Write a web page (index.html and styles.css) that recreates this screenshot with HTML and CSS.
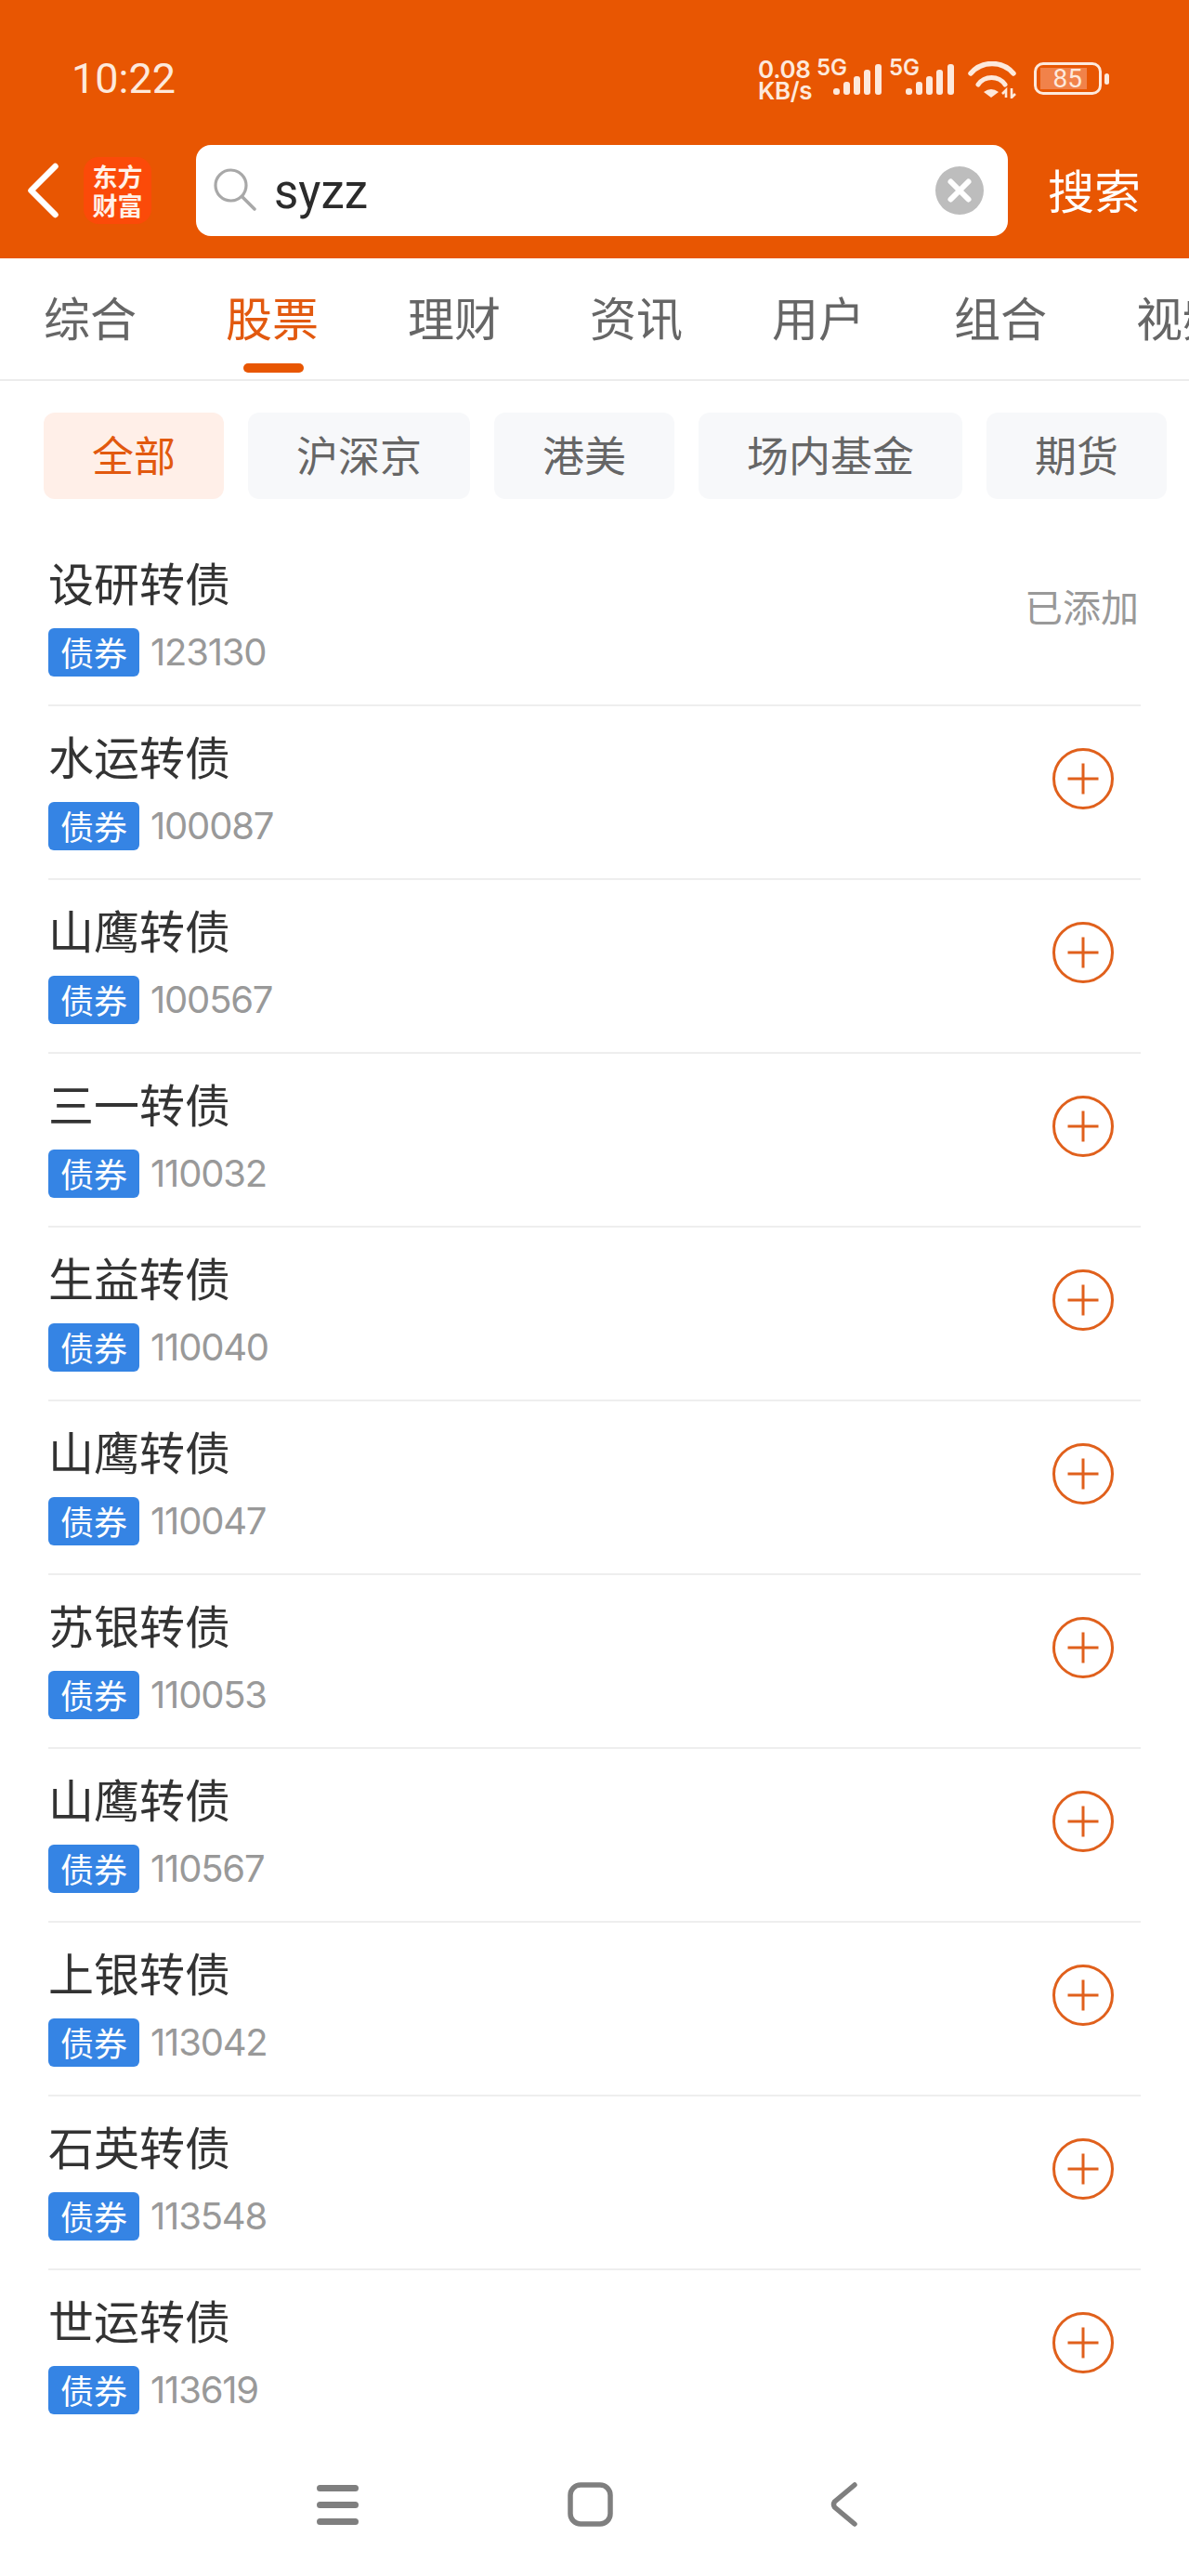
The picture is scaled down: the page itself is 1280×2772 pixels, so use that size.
FILE: index.html
```html
<!DOCTYPE html>
<html lang="zh-CN">
<head>
<meta charset="utf-8">
<title>搜索</title>
<link rel="stylesheet" href="styles.css">
</head>
<body>
<svg class="defs" width="0" height="0">
  <symbol id="plus" viewBox="0 0 66 66"><circle cx="33" cy="33" r="31.5" fill="none" stroke="#e0601c" stroke-width="3"/><path d="M16.5 33H49.5M33 16.5V49.5" stroke="#e0601c" stroke-width="3"/></symbol>
  <symbol id="bars" viewBox="0 0 52 33"><g fill="#fde9dc"><rect x="0" y="26" width="7" height="7" rx="3"/><rect x="11" y="19" width="7" height="14" rx="3"/><rect x="22" y="13" width="7" height="20" rx="3"/><rect x="33" y="6" width="7" height="27" rx="3"/><rect x="45" y="0" width="7" height="33" rx="3"/></g></symbol>
</svg>
<div class="app">
  <header class="top">
    <div class="status">
      <span class="time">10:22</span>
      <div class="status-icons">
        <div class="speed"><span>0.08</span><span>KB/s</span></div>
        <div class="sim"><span class="five">5G</span><svg class="bars"><use href="#bars"/></svg></div>
        <div class="sim"><span class="five">5G</span><svg class="bars"><use href="#bars"/></svg></div>
        <svg class="wifi" width="52" height="40" viewBox="0 0 52 40"><g fill="none" stroke="#fde9dc" stroke-linecap="round"><path d="M3 13C15 -1 37 -1 49 13" stroke-width="5.5"/><path d="M11 25C18 15 33 15 40 25" stroke-width="5"/></g><path d="M17 33Q25 27 33 33L25 39Z" fill="#fde9dc"/><path d="M41 39V31L37 35M47 29V39L51 35" fill="none" stroke="#fde9dc" stroke-width="2.6"/></svg>
        <div class="battery"><div class="cell"><div class="fill"><span class="pct">85</span></div></div><div class="cap"></div></div>
      </div>
    </div>
    <div class="searchbar">
      <svg class="back" width="34" height="60" viewBox="0 0 34 60"><path d="M30.500 4L4.500 30L30.500 56" fill="none" stroke="#fff" stroke-width="6.500" stroke-linecap="round" stroke-linejoin="round"/></svg>
      <div class="logo"><span>东方</span><span>财富</span></div>
      <div class="input">
        <svg class="glass" width="46" height="46" viewBox="0 0 46 46"><circle cx="18.500" cy="18.500" r="16.500" fill="none" stroke="#a8a8a8" stroke-width="3.200"/><path d="M30.500 30.500L44 44" stroke="#a8a8a8" stroke-width="3.500" stroke-linecap="round"/></svg>
        <span class="query">syzz</span>
        <svg class="clear" width="52" height="52" viewBox="0 0 52 52"><circle cx="26" cy="26" r="26" fill="#bdbdbd"/><path d="M16.500 16.500L35.500 35.500M35.500 16.500L16.500 35.500" stroke="#fff" stroke-width="6" stroke-linecap="round"/></svg>
      </div>
      <span class="go">搜索</span>
    </div>
  </header>

  <nav class="tabs">
    <span class="tab">综合</span>
    <span class="tab active">股票</span>
    <span class="tab">理财</span>
    <span class="tab">资讯</span>
    <span class="tab">用户</span>
    <span class="tab">组合</span>
    <span class="tab">视频</span>
  </nav>

  <div class="chips">
    <span class="chip on">全部</span>
    <span class="chip">沪深京</span>
    <span class="chip">港美</span>
    <span class="chip">场内基金</span>
    <span class="chip">期货</span>
  </div>

  <ul class="list">
    <li class="row"><div class="info"><div class="name">设研转债</div><div class="meta"><span class="tag">债券</span><span class="code">123130</span></div></div><span class="added">已添加</span></li>
    <li class="row"><div class="info"><div class="name">水运转债</div><div class="meta"><span class="tag">债券</span><span class="code">100087</span></div></div><svg class="plus"><use href="#plus"/></svg></li>
    <li class="row"><div class="info"><div class="name">山鹰转债</div><div class="meta"><span class="tag">债券</span><span class="code">100567</span></div></div><svg class="plus"><use href="#plus"/></svg></li>
    <li class="row"><div class="info"><div class="name">三一转债</div><div class="meta"><span class="tag">债券</span><span class="code">110032</span></div></div><svg class="plus"><use href="#plus"/></svg></li>
    <li class="row"><div class="info"><div class="name">生益转债</div><div class="meta"><span class="tag">债券</span><span class="code">110040</span></div></div><svg class="plus"><use href="#plus"/></svg></li>
    <li class="row"><div class="info"><div class="name">山鹰转债</div><div class="meta"><span class="tag">债券</span><span class="code">110047</span></div></div><svg class="plus"><use href="#plus"/></svg></li>
    <li class="row"><div class="info"><div class="name">苏银转债</div><div class="meta"><span class="tag">债券</span><span class="code">110053</span></div></div><svg class="plus"><use href="#plus"/></svg></li>
    <li class="row"><div class="info"><div class="name">山鹰转债</div><div class="meta"><span class="tag">债券</span><span class="code">110567</span></div></div><svg class="plus"><use href="#plus"/></svg></li>
    <li class="row"><div class="info"><div class="name">上银转债</div><div class="meta"><span class="tag">债券</span><span class="code">113042</span></div></div><svg class="plus"><use href="#plus"/></svg></li>
    <li class="row"><div class="info"><div class="name">石英转债</div><div class="meta"><span class="tag">债券</span><span class="code">113548</span></div></div><svg class="plus"><use href="#plus"/></svg></li>
    <li class="row last"><div class="info"><div class="name">世运转债</div><div class="meta"><span class="tag">债券</span><span class="code">113619</span></div></div><svg class="plus"><use href="#plus"/></svg></li>
  </ul>

  <footer class="navbar">
    <svg class="nav-menu" width="45" height="43" viewBox="0 0 45 43"><path d="M3.500 3.500H41.500M3.500 21.500H41.500M3.500 39.500H41.500" stroke="#7f7f7f" stroke-width="7" stroke-linecap="round"/></svg>
    <svg class="nav-home" width="49" height="48" viewBox="0 0 49 48"><rect x="3" y="3" width="43" height="42" rx="11" fill="none" stroke="#7f7f7f" stroke-width="5.500"/></svg>
    <svg class="nav-back" width="29" height="48" viewBox="0 0 29 48"><path d="M26 3L4.500 21Q2.500 24 4.500 27L26 45" fill="none" stroke="#7f7f7f" stroke-width="5.500" stroke-linecap="round"/></svg>
  </footer>
</div>
</body>
</html>
```
FILE: styles.css
```css
* { box-sizing: border-box; }
html, body { margin: 0; padding: 0; background: #fff; }
body { font-family: "Noto Sans CJK SC", "Noto Sans", sans-serif; }
.defs { display: block; height: 0; }
.app { width: 1280px; height: 2772px; overflow: hidden; display: flex; flex-direction: column; background: #fff; }

.top { height: 278px; background: #e85602; flex: none; }
.status { height: 156px; padding: 51px 86px 0 77px; display: flex; justify-content: space-between; align-items: flex-start; color: #fde9dc; }
.time { font: 400 45px/68px Roboto, sans-serif; }
.status-icons { display: flex; align-items: flex-start; margin-top: 12px; }
.speed { display: flex; flex-direction: column; font: 600 26px/23px Inter, Roboto, sans-serif; width: 57px; margin-right: 6px; letter-spacing: -0.3px; }
.sim { position: relative; width: 78px; height: 40px; }
.five { position: absolute; left: 0; top: -4px; font: 600 24px/28px Inter, Roboto, sans-serif; }
.bars { position: absolute; left: 18px; top: 6px; width: 52px; height: 33px; }
.wifi { margin: 3px 19px 0 7px; }
.battery { display: flex; align-items: center; margin-top: 4px; }
.cell { width: 73px; height: 35px; border: 3px solid #fde9dc; border-radius: 10px; padding: 3px 0 3px 4px; }
.fill { width: 50px; height: 23px; background: #f1824a; display: flex; justify-content: flex-end; padding-right: 5px; }
.pct { font: 400 28px/23px Roboto, sans-serif; }
.cap { width: 5px; height: 12px; background: #fde9dc; border-radius: 3px; margin-left: 3px; }

.searchbar { display: flex; align-items: center; height: 98px; }
.back { margin-left: 29px; flex: none; }
.logo { width: 73px; height: 72px; background: #fb4a09; border-radius: 16px; margin-left: 27px; flex: none; display: flex; flex-direction: column; align-items: center; justify-content: center; color: #fff1e8; font: 700 27px/31px "Noto Sans CJK SC", sans-serif; }
.input { margin-left: 48px; width: 874px; height: 98px; background: #fff; border-radius: 16px; display: flex; align-items: center; padding: 0 26px 0 19px; flex: none; }
.glass { flex: none; margin-top: -2px; }
.query { font: 400 51px/1 Roboto, sans-serif; color: #2b2b2b; margin: 3px 0 0 19px; flex: 1; }
.clear { flex: none; }
.go { margin: 0 0 5px 43px; color: #fff; font-size: 50px; line-height: 70px; }

.tabs { height: 132px; flex: none; display: flex; gap: 96px; padding: 0 0 0 47px; border-bottom: 2px solid #ececec; overflow: hidden; white-space: nowrap; }
.tab { position: relative; font-size: 50px; line-height: 1; padding-top: 37px; color: #666; flex: none; }
.tab.active { color: #e2590f; }
.tab.active::after { content: ""; position: absolute; left: 19px; width: 65px; height: 10px; top: 113px; border-radius: 5px; background: #e85602; }

.chips { display: flex; gap: 26px; padding: 34px 0 0 47px; flex: none; }
.chip { height: 93px; padding: 0 52px; border-radius: 12px; background: #f7f8fa; color: #666; font-size: 45px; line-height: 90px; flex: none; }
.chip.on { background: #ffefe8; color: #e2590f; }

.list { list-style: none; margin: 36px 0 0; padding: 0 52px; flex: none; }
.row { height: 187px; border-bottom: 2px solid #eeeeee; display: flex; justify-content: space-between; align-items: flex-start; }
.row.last { border-bottom: 0; }
.info { display: flex; flex-direction: column; padding-top: 23px; }
.name { font-size: 49px; line-height: 60px; color: #333; }
.meta { display: flex; align-items: center; margin-top: 20px; }
.tag { width: 98px; height: 52px; background: #3584e4; border-radius: 6px; color: #fff; font-size: 36px; line-height: 50px; text-align: center; }
.code { font: 400 40px/52px Inter, Roboto, sans-serif; letter-spacing: -1.2px; color: #999; margin-left: 12px; }
.added { font-size: 41px; line-height: 56px; color: #999; margin: 50px 2px 0 0; }
.plus { width: 66px; height: 66px; margin: 45px 29px 0 0; flex: none; }

.navbar { flex: none; display: flex; align-items: center; padding: 41px 0 0 341px; }
.nav-home { margin-left: 225px; }
.nav-back { margin-left: 234px; }
```
